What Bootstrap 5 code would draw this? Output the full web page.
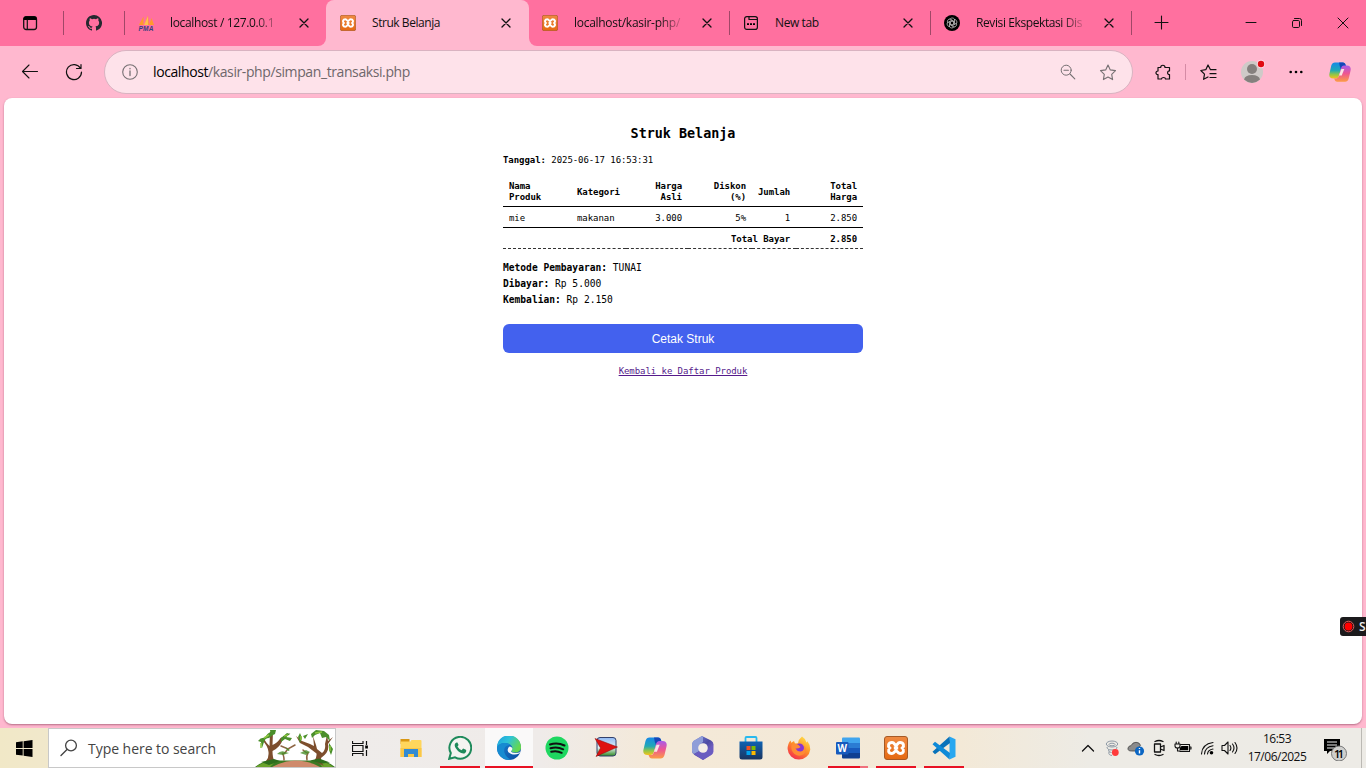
<!DOCTYPE html>
<html lang="id">
<head>
<meta charset="utf-8">
<meta name="viewport" content="width=device-width, initial-scale=1">
<title>Struk Belanja</title>
<link href="https://cdn.jsdelivr.net/npm/bootstrap@5.3.0/dist/css/bootstrap.min.css" rel="stylesheet">
<style>
  :root { --strip:#ff709f; --bar:#ffb8cf; }
  body { width:1366px; height:768px; overflow:hidden; background:var(--bar); color:#111; font-family:"Open Sans","Noto Sans",sans-serif; }
  svg { display:block; flex:none; }
  .ln { fill:none; stroke:currentColor; stroke-linecap:round; stroke-linejoin:round; }
  .strip { height:46px; }
  .strip-l { width:326px; background:var(--strip); border-radius:0 0 8px 0; }
  .strip-r { background:var(--strip); border-radius:0 0 0 8px; }
  .cell { height:24px; border-right:1px solid #a14767; }
  .tab-t { width:112px; font-size:12px; white-space:nowrap; line-height:20px; }
  .fade-t { -webkit-mask-image:linear-gradient(90deg,#000 76%,transparent 100%); mask-image:linear-gradient(90deg,#000 76%,transparent 100%); }
  .tab-b { width:201px; padding-left:13px; }
  .active-wrap { width:203px; background:linear-gradient(var(--strip) 50%,var(--bar) 50%); }
  .active-tab { background:var(--bar); border-radius:8px 8px 0 0; padding-left:14px; }
  .x-box { width:12px; margin-left:15px; }
  .win { width:46px; }
  .tool { height:52px; }
  .addr { width:1029px; height:44px; margin-left:104px; border:1px solid #d9b3c1; background:#fee2ea; border-radius:22px; color:#767073; }
  .url { font-size:14px; letter-spacing:-.4px; color:#6e676b; line-height:20px; }
  .view { width:1358px; height:626px; margin-left:4px; background:#fff; border-radius:8px; box-shadow:0 1px 2px rgba(110,40,65,.5); }
  .receipt { width:360px; font-family:"DejaVu Sans Mono","Liberation Mono",monospace; font-size:9px; letter-spacing:-.055px; line-height:11px; color:#000; }
  .receipt h1 { font-size:13.4px; line-height:18px; letter-spacing:0; font-weight:700; padding-top:27px; margin:0; }
  .date-l { margin:12px 0 0; }
  .items { width:360px; table-layout:fixed; border-collapse:collapse; margin-top:14px; }
  .items th, .items td { padding:1px 6px 0; vertical-align:middle; }
  .items thead th { padding:0 6px 1px; }
  .items thead tr { height:26px; border-bottom:1px solid #000; }
  .items tbody tr { height:21px; border-bottom:1px solid #000; }
  .items tfoot tr { height:21px; border-bottom:1px dashed #333; }
  .items tbody td, .items tfoot th { padding-top:3px; }
  .pay { font-size:9.6px; letter-spacing:.005px; line-height:16px; margin-top:11px; }
  .print { height:29px; margin-top:16px; background:#4361ee; border-radius:6px; color:#fff; font:12px/30px "Liberation Sans",Arial,sans-serif; padding:0; border:0; letter-spacing:0; }
  .print:hover { background:#4361ee; color:#fff; }
  .back-l { color:#551a8b; text-decoration:underline; }
  .rec { right:0; top:617px; width:26px; height:19px; background:#1b1a1c; color:#eee; border-radius:3px 0 0 3px; font-size:12px; font-weight:600; line-height:19px; }
  .taskbar { height:40px; margin-top:4px; background:linear-gradient(90deg,#f1e8c7 0,#f1e8cb 45px,#efecea 330px,#efebe9 540px,#f4e9d8 660px,#f3e9d7 960px,#edebe5 1090px,#edebe6 100%); }
  .find { width:288px; height:40px; background:#fff; border:1px solid #c8c8c8; font-size:14px; letter-spacing:-.04px; color:#444; }
  .app { width:40px; margin-right:8.6px; height:40px; border-bottom:2px solid transparent; display:flex; align-items:center; justify-content:center; padding-top:2px; }
  .on { border-bottom-color:#e81123; }
  .cur { width:48px; margin:0 4.600px 0 -3.400px; background:#faf9f9; }
  .word { border-image:linear-gradient(90deg,#e81123 79%,#f0707c 79%) 1; border-top:0; border-left:0; border-right:0; }
  .clock { width:66px; font-size:12px; letter-spacing:-.5px; line-height:18px; }
</style>
</head>
<body>
<svg width="0" height="0" class="position-absolute">
  <defs>
    <linearGradient id="gxo" x2="0" y2="1"><stop stop-color="#ef8a42"/><stop offset="1" stop-color="#e56912"/></linearGradient>
    <linearGradient id="gca" x2="0" y2="1"><stop stop-color="#1789e8"/><stop offset=".5" stop-color="#21a9b5"/><stop offset=".75" stop-color="#8fc54a"/><stop offset="1" stop-color="#f5c21b"/></linearGradient>
    <linearGradient id="gcb" x2="0" y2="1"><stop stop-color="#a95bea"/><stop offset=".5" stop-color="#ef5690"/><stop offset="1" stop-color="#fb9c45"/></linearGradient>
    <linearGradient id="ge1" x2="1" y2=".5"><stop stop-color="#1c9fe0"/><stop offset=".5" stop-color="#2fc3d8"/><stop offset="1" stop-color="#65d84f"/></linearGradient>
    <linearGradient id="ge2" x2="1" y2="1"><stop stop-color="#1b8bdb"/><stop offset="1" stop-color="#0c4a9c"/></linearGradient>
    <linearGradient id="gff" x1=".8" x2=".2" y2="1"><stop stop-color="#ffe34a"/><stop offset=".45" stop-color="#ff9229"/><stop offset="1" stop-color="#f3264f"/></linearGradient>
    <linearGradient id="gm" x2="1" y2="1"><stop stop-color="#7a8be0"/><stop offset=".5" stop-color="#4d4ba3"/><stop offset="1" stop-color="#a37ae8"/></linearGradient>
    <linearGradient id="gst" x2="0" y2="1"><stop stop-color="#0e62b3"/><stop offset="1" stop-color="#1b3560"/></linearGradient>
    <linearGradient id="gpl" x2="0" y2="1"><stop stop-color="#8fb8f5"/><stop offset=".55" stop-color="#e6f3f2"/><stop offset="1" stop-color="#2f8a22"/></linearGradient>
    <symbol id="xampp" viewBox="0 0 24 24"><rect x=".5" y=".5" width="23" height="23" rx="2.500" fill="url(#gxo)" stroke="#a65a26"/><path d="M12 9.300C10.800 9.300 10.500 6.500 8 6.500 4.300 6.500 3.500 9.800 5.700 12 3.500 14.200 4.300 17.500 8 17.500c2.500 0 2.800-2.800 4-2.800s1.500 2.800 4 2.800c3.700 0 4.500-3.300 2.300-5.500C20.500 9.800 19.700 6.500 16 6.500c-2.500 0-2.800 2.800-4 2.800zM9.800 12h4.400" fill="none" stroke="#fff" stroke-width="3"/></symbol>
    <symbol id="close" viewBox="0 0 12 12"><path d="M2 2l8 8M10 2l-8 8" fill="none" stroke="#111" stroke-width="1.300" stroke-linecap="round"/></symbol>
    <symbol id="copilot" viewBox="0 0 24 24"><path d="M6.500 1.500H15c2 0 2.500 1 3 2.500l.8 2.500h-2.500c-2 0-2.800 1-3.300 2.600l-2.200 6.900c-.7 2.200-1.600 3-3.500 3H4.500C1 19-.3 16.500.5 13.500L2.500 5C3.200 2.500 4.500 1.500 6.500 1.500z" fill="url(#gca)"/><path d="M11 1.500h4c2 0 2.500 1 3 2.500l.8 2.500h-2.500c-2 0-2.800 1-3.300 2.600Q11.500 6 11 1.500z" fill="#1746b8"/><path d="M17.500 22.500H9c-2 0-2.500-1-3-2.500l-.5-1h2c1.800 0 2.800-1 3.300-2.600L13 8.600C13.500 6.300 14.500 5 16.500 5h3c3.500 0 4.800 2.500 4 5.500L21.500 19c-.7 2.500-2 3.500-4 3.500z" fill="url(#gcb)"/><path d="M13.500 8.800h3.200l-2.800 7h-3z" fill="#fbe4e4"/></symbol>
  </defs>
</svg>

<header class="strip d-flex">
  <div class="strip-l d-flex align-items-center">
    <div class="cell d-flex align-items-center justify-content-center" style="width:64px">
      <svg class="me-1" width="16" height="16" viewBox="0 0 16 16"><rect x="1.700" y="1.700" width="12.800" height="12.800" rx="2.500" class="ln" stroke-width="1.300"/><path d="M1.500 5V3.500q0-2 2-2h9q2 0 2 2V5z"/><path d="M5.300 5v9.500" class="ln" stroke-width="1.200"/></svg>
    </div>
    <div class="cell d-flex align-items-center justify-content-center" style="width:61px">
      <svg width="16" height="16" viewBox="0 0 16 16" fill="#24292f"><path d="M8 0C3.580 0 0 3.580 0 8c0 3.540 2.290 6.530 5.470 7.590.4.070.55-.17.55-.38 0-.19-.01-.82-.01-1.490-2.010.37-2.530-.49-2.690-.94-.09-.23-.48-.94-.82-1.130-.28-.15-.68-.52-.01-.53.63-.01 1.080.58 1.230.82.72 1.210 1.870.87 2.330.66.070-.52.28-.87.51-1.070-1.780-.2-3.640-.89-3.640-3.950 0-.87.31-1.590.82-2.150-.08-.2-.36-1.020.08-2.120 0 0 .67-.21 2.200.82a7.600 7.600 0 0 1 4 0c1.530-1.040 2.200-.82 2.200-.82.44 1.100.16 1.920.08 2.120.51.56.82 1.270.82 2.150 0 3.070-1.870 3.750-3.650 3.950.29.25.54.73.54 1.480 0 1.070-.01 1.930-.01 2.200 0 .21.15.46.55.38A8 8 0 0 0 8 0z"/></svg>
    </div>
    <div class="tab-b d-flex align-items-center">
      <svg width="17" height="17" viewBox="0 0 17 17"><path d="M5.500 1.500v8.500H.8zM10 .5l1 9.500H6.200zM13.500 3l2.500 7h-5z" fill="#ff9a2c"/><path d="M6 10L10 1v9z" fill="#ffc04e"/><text x=".5" y="15.700" font-family="Liberation Sans" font-size="6.500" font-weight="700" font-style="italic" fill="#33407e" textLength="15">PMA</text></svg>
      <span class="tab-t fade-t" style="margin-left:15px;letter-spacing:-.35px">localhost / 127.0.0.1</span>
      <svg class="x-box" style="margin-left:16px" width="12" height="12"><use href="#close"/></svg>
    </div>
  </div>
  <div class="active-wrap">
    <div class="active-tab h-100 d-flex align-items-center">
      <svg width="16" height="16"><use href="#xampp"/></svg>
      <span class="tab-t" style="margin-left:16px;letter-spacing:-.45px">Struk Belanja</span>
      <svg class="x-box" style="margin-left:16px" width="12" height="12"><use href="#close"/></svg>
    </div>
  </div>
  <div class="strip-r d-flex align-items-center flex-fill">
    <div class="tab-b cell d-flex align-items-center">
      <svg width="16" height="16"><use href="#xampp"/></svg>
      <span class="tab-t fade-t" style="margin-left:16px;letter-spacing:-.28px">localhost/kasir-php/</span>
      <svg class="x-box" width="12" height="12"><use href="#close"/></svg>
    </div>
    <div class="tab-b cell d-flex align-items-center">
      <svg width="16" height="16" viewBox="0 0 16 16"><rect x="1.600" y="1.600" width="12.800" height="12.800" rx="2.200" class="ln" stroke-width="1.200"/><path d="M6 2v2.500h8" class="ln" stroke-width="1.200"/><path d="M4 8.300h2v1.700H4zm3 0h2v1.700H7zm3 0h2v1.700h-2z"/></svg>
      <span class="tab-t" style="margin-left:16px;letter-spacing:-.4px">New tab</span>
      <svg class="x-box" width="12" height="12"><use href="#close"/></svg>
    </div>
    <div class="tab-b cell d-flex align-items-center">
      <svg width="16" height="16" viewBox="0 0 16 16"><circle cx="8" cy="8" r="8"/><g fill="none" stroke="#d8d8d8" stroke-width=".7"><path id="petal" d="M6 4.500c.5-2 4-2 4.500 0v4L8 10"/><use href="#petal" transform="rotate(60 8 8)"/><use href="#petal" transform="rotate(120 8 8)"/><use href="#petal" transform="rotate(180 8 8)"/><use href="#petal" transform="rotate(240 8 8)"/><use href="#petal" transform="rotate(300 8 8)"/></g></svg>
      <span class="tab-t fade-t" style="margin-left:16px;letter-spacing:-.4px">Revisi Ekspektasi Dis</span>
      <svg class="x-box" width="12" height="12"><use href="#close"/></svg>
    </div>
    <svg style="margin-left:22px" width="16" height="16" viewBox="0 0 16 16"><path d="M7.500 1v13M1 7.500h13" class="ln" stroke-width="1.100"/></svg>
    <div class="d-flex ms-auto">
      <div class="win d-flex justify-content-center"><svg width="12" height="12" viewBox="0 0 12 12"><path d="M1 5.500h10" class="ln"/></svg></div>
      <div class="win d-flex justify-content-center"><svg width="12" height="12" viewBox="0 0 12 12"><rect x="1.500" y="3.500" width="7" height="7" rx="1.200" class="ln"/><path d="M3.500 1.500h5q2 0 2 2v5" class="ln"/></svg></div>
      <div class="win d-flex justify-content-center"><svg width="12" height="12" viewBox="0 0 12 12"><path d="M1 1l10 10M11 1L1 11" class="ln"/></svg></div>
    </div>
  </div>
</header>

<nav class="tool d-flex align-items-center position-relative">
  <div class="position-absolute start-0 top-0 h-100 d-flex align-items-center">
    <svg style="margin-left:21px" width="18" height="18" viewBox="0 0 18 18"><path d="M1.500 8.500h15M8 2L1.500 8.500 8 15" class="ln" stroke-width="1.100"/></svg>
    <svg style="margin-left:26px" width="18" height="18" viewBox="0 0 18 18"><path d="M15.500 5.300A7.500 7.500 0 1 0 16.500 9M16 1.500v4h-4.500" class="ln" stroke-width="1.200"/></svg>
  </div>
  <div class="addr d-flex align-items-center">
    <svg style="margin-left:17px" width="16" height="16" viewBox="0 0 16 16"><circle cx="8" cy="8" r="7.300" class="ln" stroke-width="1.100"/><path d="M8 7v4.500M8 4.500v.3" class="ln" stroke-width="1.300"/></svg>
    <span class="url" style="margin-left:15px"><span class="text-black">localhost</span>/kasir-php/simpan_transaksi.php</span>
    <svg class="ms-auto" width="16" height="16" viewBox="0 0 16 16"><circle cx="6.200" cy="6.200" r="5" class="ln"/><path d="M10 10l4.800 4.800M4 6.200h4.400" class="ln" stroke-width="1.100"/></svg>
    <svg style="margin:0 16px 0 23px" width="17" height="17" viewBox="0 0 17 17"><path d="M9 1l2.300 4.900 5.200.7-3.800 3.700.9 5.300L9 13.100l-4.600 2.500.9-5.300L1.500 6.600l5.200-.7z" class="ln" stroke-width="1.100"/></svg>
  </div>
  <svg style="margin-left:22px" width="17" height="17" viewBox="0 0 17 17"><path d="M3 3.500h2.700c0-3 4.300-3 4.300 0h4.500v3.400c-2.500-.3-2.500 4 0 3.700V15h-4c0-2-4-2-4 0H3v-4.400c-2.700.2-2.700-3.700 0-3.600z" class="ln" stroke-width="1.200"/></svg>
  <div style="width:1px;height:16px;background:#d58ba5;margin:0 14px 0 13px"></div>
  <svg width="17" height="17" viewBox="0 0 17 17"><path d="M10.500 5.700L8 1 5.800 5.700.8 6.500l3.700 3.600-.9 5.200L8 13M10.500 5.700h5.500M10 9.700h6M10 13.500h6" class="ln" stroke-width="1.200"/></svg>
  <svg style="margin-left:24px" width="26" height="26" viewBox="0 0 26 26"><circle cx="11" cy="13" r="11" fill="#cfcac8"/><circle cx="11" cy="10" r="5" fill="#85807e"/><path d="M3 20.500Q4 16 11 16t8 4.500Q11 27.500 3 20.500z" fill="#85807e"/><circle cx="20" cy="5" r="4.200" fill="#ffd9e5"/><circle cx="20" cy="5" r="3.200" fill="#e00b12"/></svg>
  <svg style="margin-left:21px" width="16" height="16" viewBox="0 0 16 16"><circle cx="2.700" cy="8" r="1.300"/><circle cx="8" cy="8" r="1.300"/><circle cx="13.300" cy="8" r="1.300"/></svg>
  <svg style="margin-left:25px" width="22" height="22"><use href="#copilot"/></svg>
</nav>

<main class="view">
  <section class="receipt mx-auto">
    <h1 class="text-center">Struk Belanja</h1>
    <p class="date-l"><b>Tanggal:</b> 2025-06-17 16:53:31</p>
    <table class="items">
      <colgroup><col style="width:68px"><col style="width:55px"><col style="width:62px"><col style="width:64px"><col style="width:44px"><col style="width:67px"></colgroup>
      <thead><tr><th>Nama Produk</th><th>Kategori</th><th class="text-end">Harga Asli</th><th class="text-end">Diskon (%)</th><th class="text-end">Jumlah</th><th class="text-end">Total Harga</th></tr></thead>
      <tbody><tr><td>mie</td><td>makanan</td><td class="text-end">3.000</td><td class="text-end">5%</td><td class="text-end">1</td><td class="text-end">2.850</td></tr></tbody>
      <tfoot><tr><th colspan="5" class="text-end">Total Bayar</th><th class="text-end">2.850</th></tr></tfoot>
    </table>
    <div class="pay"><b>Metode Pembayaran:</b> TUNAI<br><b>Dibayar:</b> Rp 5.000<br><b>Kembalian:</b> Rp 2.150</div>
    <button class="btn print w-100 d-block">Cetak Struk</button>
    <div class="text-center" style="margin-top:13px"><a class="back-l" href="#">Kembali ke Daftar Produk</a></div>
  </section>
</main>

<aside class="rec position-absolute d-flex align-items-center">
  <svg style="margin-left:2px" width="13" height="13" viewBox="0 0 13 13"><circle cx="6.500" cy="6.500" r="5.300" fill="none" stroke="#e05a5a"/><circle cx="6.500" cy="6.500" r="3.900" fill="#f00"/></svg><span style="margin-left:4px">S</span>
</aside>

<footer class="taskbar d-flex align-items-center">
  <div style="width:48px;padding-left:16px"><svg width="17" height="17" viewBox="0 0 17 17"><path d="M0 2.300L6.700 1.300V8H0zM7.600 1.200L16.500 0v8H7.600zM0 8.900h6.700v6.700L0 14.700zM7.600 8.900h8.900v8l-8.900-1.200z"/></svg></div>
  <div class="find d-flex align-items-center">
    <svg style="margin-left:11px" width="18" height="18" viewBox="0 0 18 18"><circle cx="11" cy="6.500" r="5.400" class="ln" stroke-width="1.300"/><path d="M7 10.500L1 16.500" class="ln" stroke-width="1.400"/></svg>
    <span style="margin-left:10px">Type here to search</span>
    <svg class="ms-auto" width="80" height="38" viewBox="0 0 80 38">
      <path d="M0 38Q7 32 17 31.500h46Q73 32 80 38z" fill="#3b7a22"/><path d="M17 38Q28 32 40 31.500 55 32 65 38z" fill="#cf8a6b"/><path d="M2 37q8-5 18-4l-5 5H2zM64 33q9 0 14 5H67z" fill="#6aa32c"/>
      <path d="M11 32q3-3 2.500-9T7 11l2-1q3 5 5.500 7L15 3l3-1-.5 14q5-2 8-7l10-5-8 7q-2 7-10 11 0 7 2 10zM59 32q3-3 2.500-7.500L53 18l-8-4-4-7 6 5 8 3 4 2-1-10 3 9 1 4 5 4q4-3 3-9l2-9 1 6 5-4-5 7q2 8-7 14 0 5 3 8z" fill="#7d4e2d"/>
      <g fill="none" stroke="#8e6544" stroke-linecap="round"><path d="M26 17l7 3 7-4M29 31q0-5-2-7 2 2 5-3M52 31q-1-4 1-7-2 0-5-3" stroke-width="1.500"/></g>
      <g fill="#4b8f2b"><path d="M3 12q3-4 7-3 2-5 6-6l3 2-5 4q-4 0-5 4l-2 6-1-6zM15 1h6l-1 4-4 2zM26 9l6-5 3 1-4 3 6 1-2 3-5-2-4 3zM30 18l5 3-2 1zM43 8l2-4 2 5-2 5zM48 7l5-2-3 5zM56 5l5-4 8 1 5 4 1 6-4-4-4 1-2-5-5 2-3 3zM74 14l4 6-2 6-2-5z"/><path d="M22 25q4-4 8-2l4 1-6 2zM45 24l6-3 4 2-4 3z" opacity=".8"/></g>
      <path d="M9 9l5-3M29 7l4-1M60 4l7-1M6 14v5M75 17v5M46 7v4" stroke="#8dc63f" stroke-width="1.500" fill="none"/>
      <path d="M6 33l13-3 6 2-11 4zM55 31.500l9-2 11 4-8 1z" fill="#2e6e1c"/>
    </svg>
  </div>
  <svg style="margin-left:16px" width="17" height="17" viewBox="0 0 17 17"><path d="M.5 1v2.500h10.500V1M.5 5.500h10.500v6H.5zM.5 16v-2.500h10.500V16M14.500 1v4M14.500 10v6" fill="none" stroke="#111" stroke-width="1.200"/><path d="M13.200 5.500h2.700v3h-2.700z"/></svg>
  <div class="d-flex h-100" style="margin-left:22px">
    <div class="app"><svg width="24" height="24" viewBox="0 0 24 24"><path d="M1.500 3h9v5h-9z" fill="#d99713"/><path d="M1.500 5.500h10l1-1.500h9q1 0 1 1v16h-21z" fill="#ffd65c"/><path d="M1.500 12h21v9h-21z" fill="#fac747"/><path d="M5 13h14v8h-4v-3H9v3H5z" fill="#338bd3"/></svg></div>
    <div class="app on"><svg width="24" height="24" viewBox="0 0 24 24"><path d="M1.200 22.800l1.600-5.700A10.900 10.900 0 1 1 7 21.300z" fill="#f4f4f1" stroke="#1e8a5b" stroke-width="2"/><path d="M8.600 6.500L7.400 7.200Q5.700 9 8 12.500q3 4.500 7.300 5 2.500 0 3-2.800l-.4-.9-2.800-1.300-1.500 1.700Q11 13.300 9.500 10.500l1.100-1.500-1.200-2.500z" fill="#1e8a5b"/></svg></div>
    <div class="app on cur"><svg width="24" height="24" viewBox="0 0 24 24"><circle cx="12" cy="12" r="12" fill="url(#ge2)"/><path d="M0 11A12 12 0 0 1 24 11.500c0 3.500-3 5-5.500 5-3 0-4.500-1-4.200-2 .8-1 1.200-2 1-3C15 9 11.500 7 8 7c-4 0-7 2-8 4z" fill="url(#ge1)"/><path d="M0 12c1-4 5-5 8-5 2.500 0 4.200.8 5.600 2C9 9 6 12 7.600 17c1 3 3.400 5.200 6.400 6.700A12 12 0 0 1 0 12z" fill="#178bd1"/><path d="M14.200 15c-.5 1 1.400 2 4.300 2q3.200 0 4.700-1.500l-1 2q-4 1.800-8 .5-4-1.500-3.500-4.500.3-2.500 2.300-3 1.800.5 2.300 1.500.2 1.800-1.100 3z" fill="#faf9f9"/></svg></div>
    <div class="app"><svg width="24" height="24" viewBox="0 0 24 24"><circle cx="12" cy="12" r="11.500" fill="#1ed760"/><path d="M5 8.500q7.500-2.500 14.500 1M5.500 12.300q6.500-2 12.700 1M6.200 15.800q5.300-1.600 10.500 1" class="ln" stroke-width="2" stroke="#111"/></svg></div>
    <div class="app"><svg width="24" height="24" viewBox="0 0 24 24"><rect x="3" y="1.500" width="19" height="18.500" rx="3" fill="url(#gpl)" stroke="#33406b"/><path d="M1 2.500L23.500 11 2 20.500 6.500 12z" fill="#df1111" stroke="#8d0909" stroke-width=".5"/></svg></div>
    <div class="app"><svg width="24" height="24"><use href="#copilot"/></svg></div>
    <div class="app" style="margin-right:8px"><svg width="24" height="24" viewBox="0 0 24 24"><path d="M11 0l9 4.500q2.500 1.500 2.500 4V16l-1.500 2.500L12 24l-8.500-5q-2.500-1.500-2.500-4V8l1.500-3z" fill="url(#gm)"/><path d="M11 0L2.500 5Q1 6 1 8.500V15q0 2.500 2 3l7-4L8 9l4-3V1z" fill="#8f9dd8"/><path d="M3 18l8-4 11-3v5q0 2-2 3l-8 5z" fill="#6a5cc0"/><circle cx="12" cy="12" r="4.800" fill="#f5eee6"/></svg></div>
    <div class="app" style="margin-right:8px"><svg width="24" height="24" viewBox="0 0 24 24"><path d="M6.500 6V2q0-1 1-1h9q1 0 1 1v4" fill="none" stroke="#28b9ee" stroke-width="1.800"/><path d="M.5 5.500h23V21q0 2.500-2.500 2.500H3Q.5 23.500.5 21z" fill="url(#gst)"/><path d="M7.500 10h4v4h-4z" fill="#f25022"/><path d="M12.500 10h4v4h-4z" fill="#7fba00"/><path d="M7.500 15h4v4h-4z" fill="#00a4ef"/><path d="M12.500 15h4v4h-4z" fill="#ffb900"/></svg></div>
    <div class="app" style="margin-right:9px"><svg width="24" height="24" viewBox="0 0 24 24"><path d="M15 .5q3.500 2 4.500 6 1-.5.800-1.500 3.200 4 3 8.500A11.400 11.400 0 0 1 .6 13Q.5 8 3.500 4.500L4.300 6.700 7 5l1 2.500 3-.3q.5-4 4-6.700z" fill="url(#gff)"/><circle cx="12.500" cy="12" r="4.500" fill="#8a35d3"/><path d="M4.500 9q3-2.500 7 0l2 2q-2 2-5 1.500 2 3.500 5.500 3 4-1 3.500-6 3 5-.5 8.500-5 3.500-9.500 0Q3.500 14.500 4.500 9z" fill="#ff8b34"/></svg></div>
    <div class="app word on" style="margin-right:8px"><svg width="24" height="24" viewBox="0 0 24 24"><path d="M7 1.500h16q1 0 1 1V8H6V2.500q0-1 1-1z" fill="#41a5ee"/><path d="M6 7h18v5H6z" fill="#2b7cd3"/><path d="M6 12h18v5.500H6z" fill="#185abd"/><path d="M6 17h18v4.500q0 1-1 1H7q-1 0-1-1z" fill="#103f91"/><rect y="6" width="12.500" height="12.500" rx="1" fill="#185abd"/><text x="1.500" y="16" font-size="10.500" font-weight="700" fill="#fff" textLength="9.500" lengthAdjust="spacingAndGlyphs">W</text></svg></div>
    <div class="app on" style="margin-right:8px"><svg width="24" height="24"><use href="#xampp"/></svg></div>
    <div class="app on m-0"><svg width="24" height="24" viewBox="0 0 24 24"><path d="M17.500.5l6 2.800v17.400l-6 2.800z" fill="#28a7f0"/><path d="M17.500.5L.5 15.700 3 18.300 18 7z" fill="#0872ba"/><path d="M17.500 23.500L.5 8.300 3 5.700 18 17z" fill="#0e8ad8"/></svg></div>
  </div>
  <div class="d-flex align-items-center ms-auto h-100">
    <svg width="14" height="14" viewBox="0 0 14 14"><path d="M1.500 10L7 4.500l5.500 5.500" class="ln" stroke-width="1.300"/></svg>
    <svg style="margin-left:10px" width="15" height="17" viewBox="0 0 15 17"><g fill="none" stroke="#8f9aa6"><ellipse cx="7" cy="4" rx="5.700" ry="3"/><ellipse cx="7" cy="4.500" rx="3" ry="1.300"/><path d="M2 7q0 3 5 3t5-3M3.500 9.500q-.5 3 3 3M4 12q-1 3 3 3.500"/></g><circle cx="10.300" cy="12.500" r="3.400" fill="#ff3b3b"/></svg>
    <svg style="margin-left:7px" width="18" height="16" viewBox="0 0 18 16"><path d="M4.500 11Q.5 11 1 8q.7-2.300 3-2.300Q5.500 2.300 9 2.300t4.500 3l-5 5.700z" fill="#8b8b8b" stroke="#444" stroke-width=".8"/><circle cx="12.500" cy="11" r="4.600" fill="#0b66c3"/><path d="M12.500 10.300v3.200M12.500 8v1" stroke="#fff" stroke-width="1.400"/></svg>
    <svg style="margin-left:7px" width="14" height="18" viewBox="0 0 14 18"><path d="M3 2.500q4-2 8 0M3 15.500q4 2 8 0M2.500 5h6v8h-6zM8.500 8l3.500-1.500v5L8.500 10" class="ln" stroke-width="1.300"/></svg>
    <svg style="margin-left:8px" width="18" height="16" viewBox="0 0 18 16"><path d="M1 4h5v2q0 2-2.500 2T1 6zM2.200 4V2M4.800 4V2M3.500 8v3H6M7 4.500h8.500v7H6M16 7h1v2h-1" class="ln" stroke-width="1.100"/><path d="M7.500 6h6.700v4.300H5.700V8z"/></svg>
    <svg style="margin-left:8px" width="16" height="16" viewBox="0 0 16 16"><g class="ln" stroke-width="1.100"><path d="M1.500 14Q2 4 13 2.500M4.500 14Q5 7 13 5.700M7.500 14q.5-4.300 5.500-5"/></g><circle cx="11.500" cy="12.700" r="1.800"/></svg>
    <svg style="margin-left:5px" width="18" height="16" viewBox="0 0 18 16"><path d="M1 5.500h2.500L7 2v12l-3.500-3.500H1zM9 5.500q1.800 2.500 0 5M11.500 4q3 4 0 8M14 2.500q4 5.500 0 11" class="ln" stroke-width="1.100"/></svg>
    <div class="clock text-center" style="margin-left:5px">16:53<br>17/06/2025</div>
    <svg style="margin:0 12px 0 13px" width="26" height="26" viewBox="0 0 26 26"><path d="M1 4h16v12H7l-3 3v-3H1z"/><path d="M4 7h10M4 10h10M4 13h7" stroke="#eee"/><circle cx="16" cy="18.500" r="7.500" fill="#cfcfcd" stroke="#777"/><text x="11" y="22.500" font-size="11" font-weight="600" textLength="10">11</text></svg>
    <div class="h-100" style="width:5px;border-left:1px solid #bbb9b4"></div>
  </div>
</footer>
<script src="https://cdn.jsdelivr.net/npm/bootstrap@5.3.0/dist/js/bootstrap.bundle.min.js"></script>
</body>
</html>
